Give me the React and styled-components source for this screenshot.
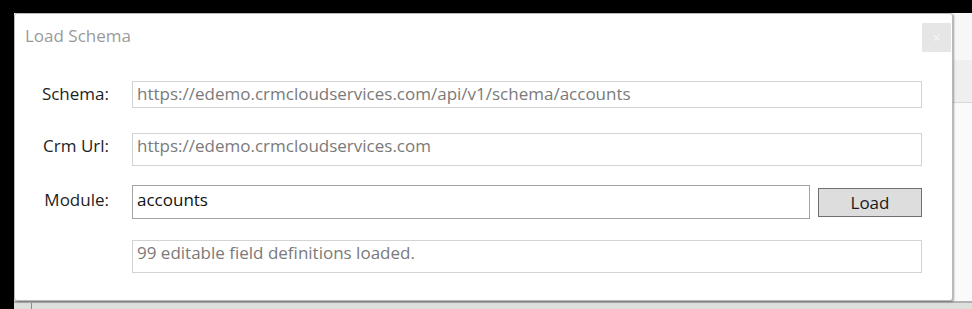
import React from "react";
import styled, { createGlobalStyle } from "styled-components";

const Global = createGlobalStyle`
  html, body { margin: 0; padding: 0; background: #000; }
  body { font-family: "Open Sans", "Noto Sans", sans-serif; }
  * { box-sizing: border-box; }
`;

const Screen = styled.div`
  position: relative;
  width: 972px;
  height: 309px;
  overflow: hidden;
  background: #000;
  padding: 13px 0 0 14px;
`;

const AppWindow = styled.div`
  height: 296px;
  background: #f7f7f7;
  display: flex;
  flex-direction: column;
`;

const AppTop = styled.div`
  height: 47px;
`;

const AppBand = styled.div`
  height: 43px;
  background: #efefef;
  border-bottom: 1px solid #d8d8d8;
`;

const AppBody = styled.div`
  flex: 1;
  background: #fafafa;
`;

const StatusStrip = styled.div`
  height: 8px;
  background: #dde0dc;
  border-top: 2px solid #b2b2b2;
  padding-left: 17px;
`;

const StripTick = styled.div`
  width: 1px;
  height: 100%;
  background: #8c8c8c;
`;

const Dialog = styled.div`
  position: absolute;
  left: 14px;
  top: 13px;
  width: 939px;
  height: 288px;
  background: #fff;
  border: 1px solid #b9b9b9;
  border-radius: 3px;
  box-shadow: 1px 1px 2px rgba(0, 0, 0, 0.35);
  display: flex;
  flex-direction: column;
`;

const Header = styled.div`
  display: flex;
  justify-content: space-between;
  align-items: flex-start;
  padding: 9px 1px 0 10px;
  height: 67px;
`;

const Title = styled.div`
  font-size: 17px;
  color: #9a9a9a;
  line-height: 26px;
`;

const CloseButton = styled.div`
  width: 29px;
  height: 29px;
  background: #e6e6e6;
  color: #f6f6f6;
  font-size: 14px;
  display: flex;
  align-items: center;
  justify-content: center;
`;

const Form = styled.div`
  display: grid;
  grid-template-columns: 80px 1fr;
  column-gap: 23px;
  padding: 0 30px 0 14px;
`;

const Label = styled.div`
  font-size: 17px;
  line-height: 22px;
  color: #1e1e1e;
  text-align: right;
  white-space: nowrap;
  height: ${(p) => p.$h}px;
  padding-top: ${(p) => p.$pt + 1}px;
  margin-top: ${(p) => p.$mt || 0}px;
`;

const FieldRow = styled.div`
  display: flex;
  gap: 8px;
  align-items: center;
  height: ${(p) => p.$h}px;
  margin-top: ${(p) => p.$mt || 0}px;
`;

const Field = styled.div`
  flex: 1;
  height: 100%;
  border: 1px solid ${(p) => (p.$active ? "#a3a3a3" : "#d3d3d3")};
  font-size: 17px;
  color: ${(p) => (p.$active ? "#111" : "#7a7a7a")};
  padding: ${(p) => p.$pt}px 4px 0 4px;
  line-height: 22px;
  white-space: nowrap;
  overflow: hidden;
`;

const Button = styled.div`
  width: 104px;
  height: 29px;
  background: #dddddd;
  border: 1px solid #707070;
  font-size: 17px;
  color: #1a1a1a;
  display: flex;
  align-items: center;
  justify-content: center;
`;

export default function App() {
  return (
    <>
      <Global />
      <Screen>
        <AppWindow>
          <AppTop />
          <AppBand />
          <AppBody />
          <StatusStrip>
            <StripTick />
          </StatusStrip>
        </AppWindow>
        <Dialog>
          <Header>
            <Title>Load Schema</Title>
            <CloseButton>×</CloseButton>
          </Header>
          <Form>
            <Label $h={27} $pt={1}>Schema:</Label>
            <FieldRow $h={27}>
              <Field $pt={1}>https://edemo.crmcloudservices.com/api/v1/schema/accounts</Field>
            </FieldRow>

            <Label $h={33} $mt={25} $pt={1}>Crm Url:</Label>
            <FieldRow $h={33} $mt={25}>
              <Field $pt={1}>https://edemo.crmcloudservices.com</Field>
            </FieldRow>

            <Label $h={34} $mt={19} $pt={3}>Module:</Label>
            <FieldRow $h={34} $mt={19}>
              <Field $active $pt={3}>accounts</Field>
              <Button>Load</Button>
            </FieldRow>

            <div />
            <FieldRow $h={33} $mt={21}>
              <Field $pt={1}>99 editable field definitions loaded.</Field>
            </FieldRow>
          </Form>
        </Dialog>
      </Screen>
    </>
  );
}
